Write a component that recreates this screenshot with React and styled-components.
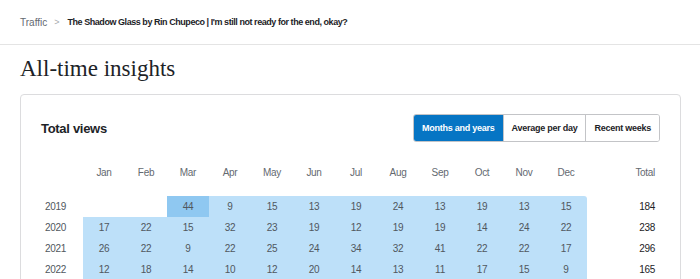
import React from 'react'
import styled, { createGlobalStyle } from 'styled-components'

const GlobalStyle = createGlobalStyle`
    body {
        margin: 0;
        background: #fff;
        font-family: "Liberation Sans", Arial, sans-serif;
        color: #1d2327;
    }
`

const months = ['Jan', 'Feb', 'Mar', 'Apr', 'May', 'Jun', 'Jul', 'Aug', 'Sep', 'Oct', 'Nov', 'Dec']

const rows = [
    { year: 2019, values: [null, null, 44, 9, 15, 13, 19, 24, 13, 19, 13, 15], total: 184, hot: 2 },
    { year: 2020, values: [17, 22, 15, 32, 23, 19, 12, 19, 19, 14, 24, 22], total: 238 },
    { year: 2021, values: [26, 22, 9, 22, 25, 24, 34, 32, 41, 22, 22, 17], total: 296 },
    { year: 2022, values: [12, 18, 14, 10, 12, 20, 14, 13, 11, 17, 15, 9], total: 165 },
]

const tabs = ['Months and years', 'Average per day', 'Recent weeks']

export default function App() {
    return (
        <>
            <GlobalStyle />
            <Header>
                <Crumb>Traffic</Crumb>
                <Chevron>&gt;</Chevron>
                <CrumbTitle>The Shadow Glass by Rin Chupeco | I'm still not ready for the end, okay?</CrumbTitle>
            </Header>

            <H1>All-time insights</H1>

            <Card>
                <CardHead>
                    <H2>Total views</H2>
                    <Tabs>
                        {tabs.map((tab, index) => (
                            <Tab key={tab} $active={index === 0}>{tab}</Tab>
                        ))}
                    </Tabs>
                </CardHead>

                <Grid>
                    <HeadCell />
                    {months.map((m) => <HeadCell key={m}>{m}</HeadCell>)}
                    <HeadCell $right>Total</HeadCell>

                    {rows.map((row) => (
                        <React.Fragment key={row.year}>
                            <YearCell>{row.year}</YearCell>
                            {row.values.map((v, index) => (
                                <Cell
                                    key={index}
                                    $filled={v !== null}
                                    $hot={row.hot === index}
                                    $corner={row.year === 2019 && index === 11}
                                >
                                    {v}
                                </Cell>
                            ))}
                            <TotalCell>{row.total}</TotalCell>
                        </React.Fragment>
                    ))}
                </Grid>
            </Card>
        </>
    )
}

const Header = styled.header`
    height: 44px;
    border-bottom: 1px solid #e4e4e4;
    display: flex;
    align-items: center;
    padding-left: 20px;
`

const Crumb = styled.span`
    color: #646970;
    font-size: 10px;
`

const Chevron = styled.span`
    color: #a7aaad;
    margin: 0 8px 0 7px;
    font-size: 9px;
`

const CrumbTitle = styled.span`
    color: #1d2327;
    font-size: 9px;
    font-weight: 700;
    letter-spacing: -0.45px;
`

const H1 = styled.h1`
    margin: 10px 0 11px 20px;
    font-family: "Liberation Serif", "Times New Roman", serif;
    font-weight: 400;
    font-size: 23px;
    line-height: 28px;
    color: #1d2327;
`

const Card = styled.section`
    margin: 0 19px 0 20px;
    border: 1px solid #dcdcde;
    border-radius: 4px;
    padding: 19px 20px 30px 20px;
`

const CardHead = styled.div`
    display: flex;
    align-items: center;
    justify-content: space-between;
`

const H2 = styled.h2`
    margin: 0;
    font-size: 13px;
    font-weight: 700;
    letter-spacing: -0.3px;
    color: #1d2327;
`

const Tabs = styled.div`
    display: flex;
    height: 28px;
    border: 1px solid #c3c4c7;
    border-radius: 3px;
    overflow: hidden;
    box-sizing: border-box;
`

const Tab = styled.button`
    border: none;
    border-left: 1px solid #c3c4c7;
    padding: 0 8px;
    font-family: inherit;
    font-size: 9px;
    font-weight: 700;
    letter-spacing: -0.25px;
    background: ${(p) => (p.$active ? '#0675c4' : '#fff')};
    color: ${(p) => (p.$active ? '#fff' : '#1d2327')};

    &:first-child {
        border-left: none;
    }
`

const Grid = styled.div`
    display: grid;
    grid-template-columns: 42px repeat(12, 42px) 1fr;
    grid-template-rows: 34px;
    grid-auto-rows: 21px;
    margin-top: 20px;
    font-size: 10px;
    letter-spacing: -0.3px;
`

const HeadCell = styled.div`
    height: 21px;
    display: flex;
    align-items: center;
    justify-content: ${(p) => (p.$right ? 'flex-end' : 'center')};
    padding-right: ${(p) => (p.$right ? '5px' : '0')};
    color: #646970;
`

const YearCell = styled.div`
    display: flex;
    align-items: center;
    padding-left: 4px;
    color: #50575e;
`

const Cell = styled.div`
    display: flex;
    align-items: center;
    justify-content: center;
    color: #50575e;
    background: ${(p) => (p.$hot ? '#8fc8f1' : p.$filled ? '#bde0f9' : 'transparent')};
    border-top-right-radius: ${(p) => (p.$corner ? '3px' : '0')};
`

const TotalCell = styled.div`
    display: flex;
    align-items: center;
    justify-content: flex-end;
    padding-right: 5px;
    color: #1d2327;
`
